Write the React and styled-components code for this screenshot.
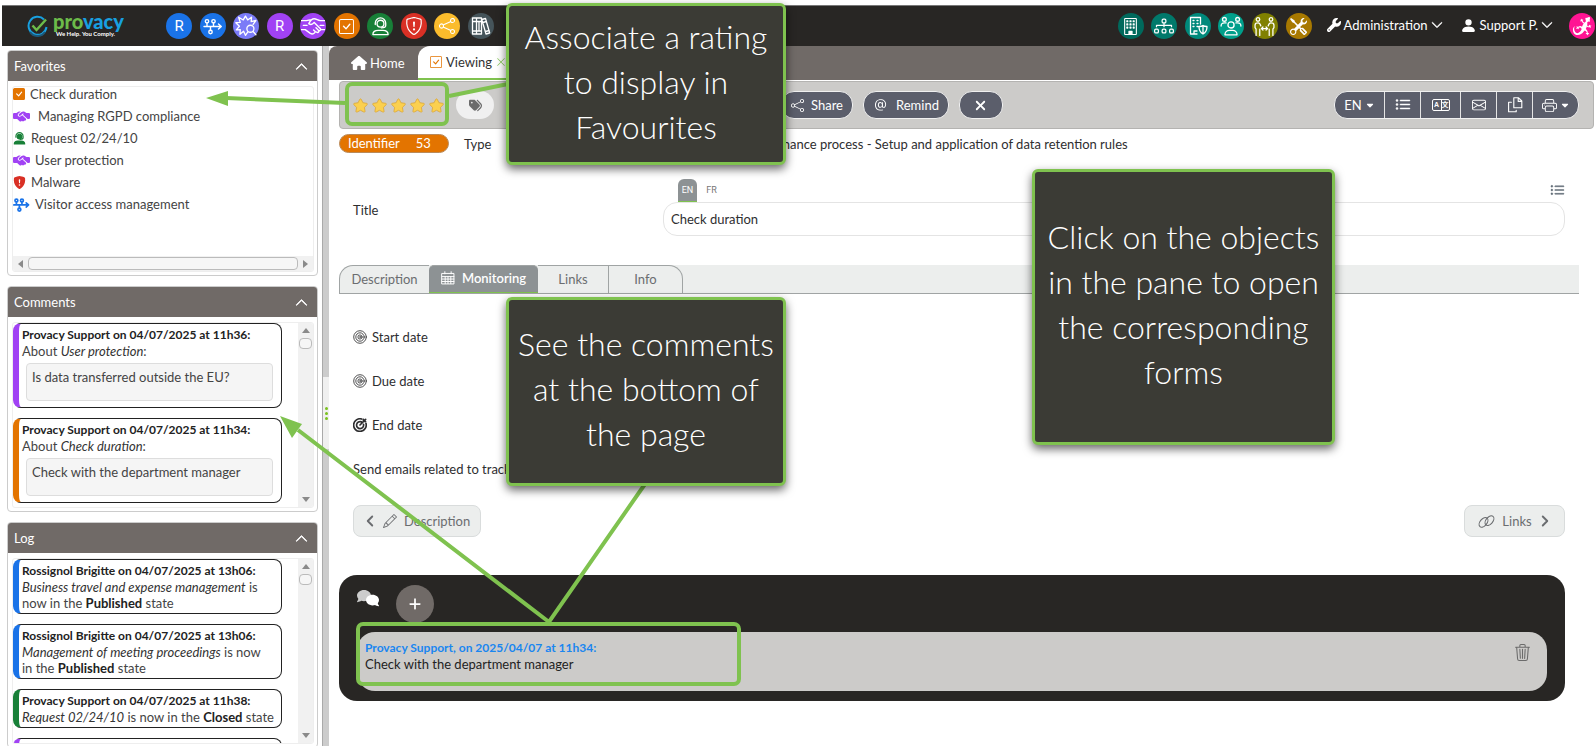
import React, { useState } from "react";
import styled, { createGlobalStyle } from "styled-components";
import {
  BsAt,
  BsBuilding,
  BsCheckSquare,
  BsCheckSquareFill,
  BsChevronDown,
  BsChevronLeft,
  BsChevronRight,
  BsChevronUp,
  BsDiagram3,
  BsEnvelope,
  BsListUl,
  BsPencil,
  BsPersonFill,
  BsPrinter,
  BsShare,
  BsShieldExclamation,
  BsShieldFillExclamation,
  BsTools,
  BsTrash3,
  BsXLg
} from "react-icons/bs";
import { FaCaretDown, FaComment, FaHandshakeSimple, FaHouse, FaPlus, FaStar, FaTags, FaWrench, FaXmark } from "react-icons/fa6";
import { GiGecko } from "react-icons/gi";

const green = "#7fc24f";
const blue = "#1a73e8";
const purple = "#a142f4";
const orange = "#e37400";
const darkGreen = "#188038";
const red = "#d93025";

const GlobalStyle = createGlobalStyle`
  * { box-sizing: border-box; }
  body {
    margin: 0;
    background: #fff;
    color: #2e2e30;
    font-family: Lato, "Liberation Sans", sans-serif;
    font-size: 13px;
    line-height: 16px;
  }
  button, input { font-family: inherit; font-size: inherit; line-height: inherit; color: inherit; }
  svg { flex: none; display: block; }
`;

const Page = styled.div`
  position: relative;
  display: flex;
  flex-direction: column;
  height: 100vh;
  padding: 5px 0 0 2px;
  overflow: hidden;
`;

/* top bar */

const TopBar = styled.header`
  display: flex;
  align-items: center;
  flex: none;
  height: 41px;
  padding: 0 1px 0 25px;
  background: #282624;
  border-top: 1px solid #777;
  color: #fff;
`;
const Logo = styled.a`
  display: flex;
  align-items: center;
  gap: 5px;
  width: 139px;
  color: #fff;
  text-decoration: none;
`;
const LogoText = styled.span`
  display: flex;
  flex-direction: column;
`;
const LogoName = styled.span`
  font-size: 20px;
  font-weight: 900;
  line-height: 16px;
  color: #18a0e0;

  b { color: #6cbb4a; font-weight: inherit; }
`;
const LogoTagline = styled.span`
  padding-left: 3px;
  font-size: 6px;
  font-weight: 700;
  line-height: 10px;
  white-space: nowrap;
`;
const Shortcuts = styled.nav`
  display: flex;
  justify-content: space-between;
  width: ${(p) => p.$width}px;
  margin-left: ${(p) => (p.$end ? "auto" : "0")};
`;
const Shortcut = styled.button`
  display: flex;
  align-items: center;
  justify-content: center;
  width: 26px;
  height: 26px;
  padding: 0;
  border: 0;
  border-radius: 50%;
  background: ${(p) => p.$color};
  color: #fff;
  cursor: pointer;
`;
const Letter = styled.span`
  font-family: Roboto, sans-serif;
  font-size: 15px;
`;
const MenuButton = styled.button`
  display: flex;
  align-items: center;
  gap: 3px;
  margin-left: ${(p) => p.$gap}px;
  padding: 0 0 2px;
  border: 0;
  background: none;
  color: #fff;
  cursor: pointer;
`;
const GeckoButton = styled(Shortcut)`
  margin-left: 16px;
`;

/* sidebar */

const Body = styled.div`
  display: flex;
  flex: 1;
  min-height: 0;
`;
const Sidebar = styled.aside`
  display: flex;
  flex-direction: column;
  gap: 10px;
  width: 320px;
  padding: 4px 4px 0 5px;
  overflow: hidden;
`;
const Panel = styled.section`
  display: flex;
  flex-direction: column;
  flex: none;
  height: 226px;
  border: 1px solid #ccc;
  border-radius: 4px;
`;
const PanelHead = styled.header`
  display: flex;
  align-items: center;
  justify-content: space-between;
  height: 30px;
  padding: 0 9px 0 6px;
  border-radius: 3px 3px 0 0;
  background: #706a67;
  color: #fff;

  h2 { margin: 0; font-size: 13px; font-weight: 400; }
  button { padding: 0; border: 0; background: none; cursor: pointer; }
`;
const PanelBody = styled.div`
  display: flex;
  flex: 1;
  flex-direction: ${(p) => (p.$column ? "column" : "row")};
  min-height: 0;
  margin: 5px 3px 3px 4px;
  border: 1px solid #eee;
  border-radius: 3px;
  overflow: hidden;
`;
const FavoriteList = styled.ul`
  flex: 1;
  margin: -4px 0 0;
  padding: 0;
  list-style: none;
`;
const Favorite = styled.a`
  display: flex;
  align-items: center;
  gap: ${(p) => p.$gap}px;
  height: 22px;
  color: #444;
  text-decoration: none;

  svg { color: ${(p) => p.$color}; }
`;
const ScrollTrack = styled.div`
  display: flex;
  flex-direction: ${(p) => (p.$vertical ? "column" : "row")};
  align-items: center;
  justify-content: space-between;
  flex: none;
  padding: ${(p) => (p.$vertical ? "4px 1px" : "1px 4px")};
  width: ${(p) => (p.$vertical ? "15px" : "auto")};
  height: ${(p) => (p.$vertical ? "auto" : "15px")};
  gap: 3px;
  background: #f1f1f1;
  color: #8a8a8a;
`;
const ScrollThumb = styled.div`
  flex: ${(p) => (p.$vertical ? "none" : "1")};
  width: ${(p) => (p.$vertical ? "13px" : "auto")};
  height: ${(p) => (p.$vertical ? "11px" : "13px")};
  margin-bottom: ${(p) => (p.$vertical ? "auto" : "0")};
  border: 1px solid #bbb;
  border-radius: 4px;
  background: #f6f6f6;
`;
const Cards = styled.div`
  display: flex;
  flex: 1;
  flex-direction: column;
  gap: 10px;
  min-width: 0;
  padding-right: 16px;
  overflow: hidden;
`;
const Card = styled.article`
  flex: none;
  padding: 3px 2px 2px 3px;
  border: 1px solid #222;
  border-left: 6px solid ${(p) => p.$color};
  border-radius: 8px;
  color: #444;

  h3 { margin: 0; font-size: 12px; line-height: 16px; white-space: nowrap; }
  h3, strong { color: #222; }
  p { margin: 0; }
  em { color: #333; }
`;
const Quote = styled.div`
  height: 38px;
  margin: 4px 6px 4px 4px;
  padding: 5px;
  border: 1px solid #ddd;
  border-radius: 4px;
  background: #f5f5f5;
`;
const Splitter = styled.div`
  display: flex;
  flex: none;
  align-items: center;
  width: 7px;
  padding-top: 34px;
  border-left: 1px solid #aaa;
  background: #ccc;
`;
const SplitterGrip = styled.div`
  display: flex;
  flex-direction: column;
  align-items: center;
  justify-content: center;
  gap: 2px;
  width: 6px;
  height: 72px;
  background: #f0f0f0;

  span { width: 3px; height: 3px; border-radius: 50%; background: #7ac11f; }
`;

/* main area */

const Main = styled.main`
  flex: 1;
  min-width: 0;
`;
const PageTabs = styled.nav`
  display: flex;
  height: 34px;
  padding-left: 22px;
  border-radius: 8px 0 0 0;
  background: #706a67;
`;
const PageTab = styled.button`
  display: flex;
  align-items: center;
  gap: ${(p) => (p.$active ? 4 : 3)}px;
  width: ${(p) => p.$width}px;
  padding: ${(p) => (p.$active ? "0 12px" : "0")};
  border: 0;
  border-bottom: ${(p) => (p.$active ? `2px solid ${green}` : "0")};
  border-radius: 12px 12px 0 0;
  background: ${(p) => (p.$active ? "#fff" : "none")};
  color: ${(p) => (p.$active ? "#333" : "#fff")};
  cursor: pointer;
`;
const Toolbar = styled.div`
  display: flex;
  align-items: center;
  height: 48px;
  margin: 1px 2px 0 10px;
  padding: 0 14px 0 13px;
  border: 1px solid #b4b3b1;
  border-radius: 4px;
  background: #cccbc9;
`;
const Stars = styled.div`
  display: flex;
  gap: 4px;
  width: 103px;

  svg { color: #fbd04f; stroke: #d9a437; stroke-width: 30px; overflow: visible; }
`;
const TagButton = styled.button`
  display: flex;
  align-items: center;
  justify-content: center;
  width: 38px;
  height: 28px;
  border: 0;
  border-radius: 14px;
  background: #f0f0f0;
  color: #6b6b6b;
`;
const ToolButtons = styled.div`
  display: flex;
  align-items: center;
  gap: 10px;
  margin-left: 287px;
`;
const ToolButton = styled.button`
  display: flex;
  align-items: center;
  justify-content: center;
  gap: 7px;
  min-width: 44px;
  height: 28px;
  padding: 0 9px;
  border: 1px solid #f0f0f0;
  border-radius: 13px;
  background: #5b5e6b;
  color: #fff;
  cursor: pointer;
`;
const ButtonGroup = styled.div`
  display: flex;
  margin-left: auto;
  border: 1px solid #f0f0f0;
  border-radius: 13px;
  background: #5b5e6b;
  overflow: hidden;
`;
const GroupButton = styled.button`
  display: flex;
  align-items: center;
  justify-content: center;
  gap: 3px;
  width: ${(p) => p.$width}px;
  height: 26px;
  padding: 0;
  border: 0;
  border-left: ${(p) => (p.$first ? "0" : "1px solid #e4e4e4")};
  background: none;
  color: #fff;
  cursor: pointer;
`;
const LanguagePair = styled.span`
  display: grid;
  grid-template-columns: 1fr 1fr;
  width: 18px;
  height: 12px;
  border: 1px solid #fff;
  border-radius: 2px;
  font-family: "Liberation Sans", "Noto Sans CJK SC", sans-serif;
  font-size: 7px;
  font-weight: 700;
  line-height: 10px;

  span + span { border-left: 1px solid #fff; }
`;
const MetaRow = styled.div`
  display: flex;
  align-items: center;
  height: 29px;
  padding-left: 10px;
`;
const Identifier = styled.span`
  display: flex;
  gap: 16px;
  width: 110px;
  height: 19px;
  padding: 0 8px;
  border: 1px solid #b98a5a;
  border-radius: 10px;
  background: ${orange};
  color: #fff;
`;
const MetaLabel = styled.span`
  width: 284px;
  margin-left: 15px;
`;
const TitleRow = styled.div`
  display: grid;
  grid-template-columns: 310px 1fr;
  align-items: end;
  padding: 21px 31px 0 24px;

  label { padding-bottom: 18px; }
`;
const LangBar = styled.div`
  display: flex;
  align-items: center;
  padding-left: 15px;
  color: #5f6a74;

  svg { margin-left: auto; }
`;
const LangTab = styled.button`
  width: ${(p) => (p.$active ? "19px" : "29px")};
  height: 23px;
  padding: 0;
  border: 0;
  border-bottom: 1px solid ${(p) => (p.$active ? green : "transparent")};
  border-radius: 6px 6px 0 0;
  background: ${(p) => (p.$active ? "#8d9294" : "none")};
  color: ${(p) => (p.$active ? "#fff" : "#777")};
  font-family: Roboto, sans-serif;
  font-size: 9px;
`;
const TitleInput = styled.input`
  width: 100%;
  height: 34px;
  padding: 0 7px;
  border: 1px solid #e4e4e4;
  border-radius: 14px;
  background: #fff;
`;
const FormTabs = styled.nav`
  display: flex;
  height: 29px;
  margin: 29px 17px 0 10px;
  border-bottom: 1px solid #a0a4a4;
  background: linear-gradient(to right, #fff 20px, #eceeed 20px);
`;
const FormTab = styled.button`
  display: flex;
  align-items: center;
  justify-content: center;
  gap: 7px;
  width: ${(p) => p.$width}px;
  padding: 0 0 2px;
  border: 1px solid #a0a4a4;
  border-width: 1px ${(p) => (p.$active || p.$joined ? 0 : 1)}px 0 0;
  border-left-width: ${(p) => (p.$edge === "left" ? 1 : 0)}px;
  border-bottom: ${(p) => (p.$active ? `1px solid ${green}` : "0")};
  border-radius: ${(p) => (p.$edge === "left" ? "14px 0 0 0" : p.$edge === "right" ? "0 14px 0 0" : p.$active ? "5px 5px 0 0" : "0")};
  background: ${(p) => (p.$active ? "#8d9294" : "#eceeed")};
  color: ${(p) => (p.$active ? "#fff" : "#6b6d70")};
  font-weight: ${(p) => (p.$active ? 600 : 400)};
  cursor: pointer;
`;
const Fields = styled.div`
  padding: 21px 31px 0 24px;
`;
const Field = styled.div`
  display: flex;
  align-items: center;
  gap: 5px;
  height: 44px;
`;
const StepRow = styled.div`
  display: flex;
  justify-content: space-between;
  padding: 14px 31px 0 24px;
`;
const StepButton = styled.button`
  display: flex;
  align-items: center;
  justify-content: center;
  gap: 7px;
  min-width: 101px;
  height: 32px;
  padding: 0 10px;
  border: 1px solid #d9dcdc;
  border-radius: 8px;
  background: #eceeed;
  color: #6b6d70;
  cursor: pointer;
`;
const Discussion = styled.section`
  margin: 38px 31px 0 10px;
  padding: 10px 18px;
  border-radius: 18px;
  background: #282624;
  color: #fff;
`;
const DiscussionHead = styled.div`
  display: flex;
  gap: 17px;
  padding-bottom: 9px;
`;
const Bubbles = styled.span`
  display: flex;
  width: 22px;
  height: 20px;
  margin-top: 4px;

  svg:first-child { color: #ccc; }
  svg:last-child { margin: 5px 0 0 -5px; transform: scaleX(-1); }
`;
const AddButton = styled.button`
  display: flex;
  align-items: center;
  justify-content: center;
  width: 38px;
  height: 38px;
  padding: 0;
  border: 0;
  border-radius: 50%;
  background: #706a67;
  color: #fff;
  cursor: pointer;
`;
const Comment = styled.article`
  display: flex;
  justify-content: space-between;
  height: 59px;
  padding: 8px 16px 8px 8px;
  border-radius: 18px;
  background: #cccbc9;
  color: #222;

  h3 { margin: 0; color: #1a86f0; font-size: 12px; line-height: 16px; }
  p { margin: 0; }
  button { height: 22px; padding: 4px 0; border: 0; background: none; color: #6b6b6b; }
`;

/* guided tour laid over the page */

const Callout = styled.div`
  position: absolute;
  left: ${(p) => p.$x}px;
  top: ${(p) => p.$y}px;
  display: flex;
  align-items: center;
  justify-content: center;
  width: ${(p) => p.$w}px;
  height: ${(p) => p.$h}px;
  padding-bottom: 6px;
  border: 3px solid ${green};
  border-radius: 6px;
  background: #3b3b35;
  box-shadow: 0 4px 10px rgba(0, 0, 0, 0.6);
  color: #fff;
  font-size: 32px;
  font-weight: 300;
  line-height: 45px;
  text-align: center;
  white-space: pre-line;
`;
const Arrows = styled.svg`
  position: absolute;
  left: 0;
  top: 0;
  width: 100%;
  height: 100%;
  pointer-events: none;
`;

const Glyph = ({ size = 20, width = 1.4, children }) => (
  <svg width={size} height={size} viewBox="0 0 20 20" fill="none" stroke="currentColor" strokeWidth={width} strokeLinecap="round" strokeLinejoin="round" aria-hidden="true">
    {children}
  </svg>
);

const Flow = (props) => (
  <Glyph {...props}>
    <path d="M1 10.5h17M15.5 8l2.8 2.5-2.8 2.5M4 10.5V7M10.5 10.5V7M7.5 10.5v4" />
    <circle cx="4" cy="5.3" r="1.7" /><circle cx="10.5" cy="5.3" r="1.7" /><circle cx="7.5" cy="16" r="1.7" />
  </Glyph>
);
const Burst = () => (
  <Glyph size={22} width={1.2}>
    <path d="M11.5 15.5l-2 3-1.7-3.8L4.5 17.5l.3-4.2-3.6.2L4 10.2.8 7l4-.3L3.3 2l4.2 2.5L9.5 1l2 3.5L15 2l-.3 4 4.300-1-2.500 3.500" />
    <circle cx="14" cy="12.5" r="3.2" /><path d="M16.300 14.900l2.700 3" />
  </Glyph>
);
const Shake = () => (
  <Glyph size={24} width={1.2}>
    <path d="M0 5.5h4.5c2 0 2.5-1 4-.5M20 5.5h-4c-2 0-3-1.5-5-1.5-2 0-3.5 2-4.5 4 2 1.5 3.5.3 4.5-1l5 5c1 1.2-.5 2.5-1.5 1.5M0 13h3.5l4 3c1.5 1 3 .7 4-.5M20 13h-3.5M2 9.5h3M16 9.5h3M12.5 11.5l2 2c1 1.2-.5 2.5-1.7 1.5M10.5 13.3l1.5 1.5" />
  </Glyph>
);
const Agent = ({ filled, size = 20 }) => (
  <Glyph size={size} width={filled ? 1.8 : 1.4}>
    <circle cx="10" cy="7" r="3.6" fill={filled ? "currentColor" : "none"} />
    <path d="M4.5 8V6.5a5.5 5.5 0 0 1 11 0V9c0 2-2 2.5-4.5 2.5" />
    <path d="M2 18.5c0-3 2-4.5 5.5-4.5h5c3.5 0 5.5 1.5 5.5 4.5z" fill={filled ? "currentColor" : "none"} />
  </Glyph>
);
const Books = () => (
  <Glyph width={1.3}>
    <path d="M1.5 2h4v16h-4zM5.5 2h5v16h-5zM1.5 5.5h9M1.5 15h9M8 5.5v9.5M10.8 3.5l3.7-1L18.7 17l-3.7 1zM11.7 6.5l3.7-1M14.5 15.5l3.7-1" />
  </Glyph>
);
const ShieldedBuilding = () => (
  <Glyph width={1.3}>
    <path d="M9 18H2.5V1.5h10V8M6 18v-3h3M5 4.5h1M9 4.5h1M5 7.5h1M9 7.5h1M5 10.5h1M9 10.5h1M15 9.5c1 1 2.5 1 4 1 0 4-1 6-4 7.5-3-1.5-4-3.5-4-7.5 1.5 0 3 0 4-1zM15 10v7.5" />
  </Glyph>
);
const Crowd = () => (
  <Glyph size={22} width={1.2}>
    <circle cx="10" cy="9" r="2.8" /><circle cx="4" cy="4" r="1.7" /><circle cx="16" cy="4" r="1.7" />
    <path d="M4.5 18c0-2.5 2-4 4-4h3c2 0 4 1.5 4 4zM1 10c0-2 1-2.8 3-2.8h1.5M19 10c0-2-1-2.8-3-2.8h-1.5" />
  </Glyph>
);
const Exchange = () => (
  <Glyph size={21} width={1.2}>
    <circle cx="3.8" cy="3.3" r="1.7" /><circle cx="16.2" cy="3.3" r="1.7" />
    <path d="M2 18.5v-6L1 11V8.5C1 7 2 6.5 4 6.5c1.5 0 2 1 2.5 3M5.5 18.5v-6M18 18.5v-6l1-1.5V8.5c0-1.5-1-2-3-2-1.5 0-2 1-2.5 3M14.5 18.5v-6M7 12h6M8.5 10.5L7 12l1.5 1.5M11.5 10.5L13 12l-1.5 1.5" />
  </Glyph>
);
const Pages = () => (
  <Glyph size={16}>
    <path d="M8.5 1h6l4 4v8.5h-10zM14 1v4.5h4.5M5.5 6.5H2V18.5h9.5v-2" />
  </Glyph>
);
const Calendar = () => (
  <Glyph size={14}>
    <path d="M1.5 3.5h17v15h-17zM1.5 8h17M1.5 11.5h17M1.5 15h17M6 8v10M10 8v10M14 8v10M5.5 1v3M14.5 1v3" />
  </Glyph>
);
const Target = () => (
  <Glyph size={14} width={1.2}>
    <circle cx="10" cy="10" r="9" /><circle cx="10" cy="10" r="6" /><circle cx="10" cy="10" r="3" /><circle cx="10" cy="10" r="0.5" />
  </Glyph>
);
const TargetHit = () => (
  <Glyph size={14} width={2.4}>
    <path d="M12.5 1.5a9 9 0 1 0 6 6M12 5.5a5 5 0 1 0 3 3.5M10 10l8-8M15 2v3h3" />
  </Glyph>
);
const Chain = () => (
  <Glyph size={17} width={1.3}>
    <ellipse cx="6.5" cy="11" rx="6.5" ry="4" transform="rotate(-50 6.5 11)" />
    <ellipse cx="13.5" cy="9" rx="6.5" ry="4" transform="rotate(-50 13.5 9)" />
  </Glyph>
);
const Triangle = ({ turn }) => (
  <svg width="8" height="8" viewBox="0 0 8 8" aria-hidden="true">
    <path d="M0 6l4-5 4 5z" fill="currentColor" transform={`rotate(${turn} 4 4)`} />
  </svg>
);

const leftShortcuts = [
  { name: "Records", color: blue, icon: <Letter>R</Letter> },
  { name: "Processes", color: blue, icon: <Flow /> },
  { name: "Analyses", color: "#7b7bf7", icon: <Burst /> },
  { name: "Processor records", color: purple, icon: <Letter>R</Letter> },
  { name: "Contracts", color: purple, icon: <Shake /> },
  { name: "Tasks", color: orange, icon: <BsCheckSquare size={15} /> },
  { name: "Requests", color: darkGreen, icon: <Agent size={19} /> },
  { name: "Incidents", color: red, icon: <BsShieldExclamation size={18} /> },
  { name: "Share", color: "#fbbc2c", icon: <BsShare size={16} /> },
  { name: "Library", color: "#45545a", icon: <Books /> }
];

const rightShortcuts = [
  { name: "Company", color: "#00695c", icon: <BsBuilding size={17} /> },
  { name: "Organisation", color: "#00796b", icon: <BsDiagram3 size={20} /> },
  { name: "Protection", color: "#00897b", icon: <ShieldedBuilding /> },
  { name: "People", color: "#009f8b", icon: <Crowd /> },
  { name: "Third parties", color: "#808000", icon: <Exchange /> },
  { name: "Tools", color: "#a87900", icon: <BsTools size={17} /> }
];

const favorites = [
  { label: "Check duration", color: orange, gap: 5, icon: <BsCheckSquareFill size={12} /> },
  { label: "Managing RGPD compliance", color: purple, gap: 8, icon: <FaHandshakeSimple size={17} /> },
  { label: "Request 02/24/10", color: darkGreen, gap: 5, icon: <Agent filled size={13} /> },
  { label: "User protection", color: purple, gap: 5, icon: <FaHandshakeSimple size={17} /> },
  { label: "Malware", color: red, gap: 5, icon: <BsShieldFillExclamation size={13} /> },
  { label: "Visitor access management", color: blue, gap: 5, icon: <Flow size={17} width={2} /> }
];

const comments = [
  { time: "11h36", about: "User protection", text: "Is data transferred outside the EU?", color: purple },
  { time: "11h34", about: "Check duration", text: "Check with the department manager", color: orange }
];

const logs = [
  { who: "Rossignol Brigitte", time: "13h06", object: "Business travel and expense management", state: "Published", color: blue },
  { who: "Rossignol Brigitte", time: "13h06", object: "Management of meeting proceedings", state: "Published", color: blue },
  { who: "Provacy Support", time: "11h38", object: "Request 02/24/10", state: "Closed", color: darkGreen },
  { who: "Provacy Support", time: "11h37", object: "User protection", state: "Published", color: purple }
];

const SidePanel = ({ title, children }) => (
  <Panel>
    <PanelHead>
      <h2>{title}</h2>
      <button aria-label={`Collapse ${title}`}><BsChevronUp size={13} strokeWidth={1} /></button>
    </PanelHead>
    {children}
  </Panel>
);

const VerticalScroll = () => (
  <ScrollTrack $vertical>
    <Triangle turn={0} />
    <ScrollThumb $vertical />
    <Triangle turn={180} />
  </ScrollTrack>
);

const ShortcutBar = ({ items, width, end }) => (
  <Shortcuts $width={width} $end={end}>
    {items.map((s) => (
      <Shortcut key={s.name} $color={s.color} aria-label={s.name}>{s.icon}</Shortcut>
    ))}
  </Shortcuts>
);

const App = () => {
  const [title, setTitle] = useState("Check duration");

  return (
    <Page>
      <GlobalStyle />
      <TopBar>
        <Logo href="#">
          <svg width="21" height="22" viewBox="0 0 21 22" fill="none" aria-hidden="true">
            <path d="M17 4.5A9 9 0 1 0 19.5 12" stroke="#18a0e0" strokeWidth="2" />
            <path d="M3 17a9 9 0 0 0 15 0" stroke="#1c5878" strokeWidth="2" />
            <path d="M5.5 10.5l4 4.5L19 4.5" stroke="#6cbb4a" strokeWidth="2.5" />
          </svg>
          <LogoText>
            <LogoName><b>pro</b>vacy</LogoName>
            <LogoTagline>We Help. You Comply.</LogoTagline>
          </LogoText>
        </Logo>
        <ShortcutBar items={leftShortcuts} width={328} />
        <ShortcutBar items={rightShortcuts} width={194} end />
        <MenuButton $gap={15}><FaWrench size={14} />Administration <BsChevronDown size={12} strokeWidth={1} /></MenuButton>
        <MenuButton $gap={17}><BsPersonFill size={17} />Support P. <BsChevronDown size={12} strokeWidth={1} /></MenuButton>
        <GeckoButton $color="#ff1493" aria-label="Assistant"><GiGecko size={20} /></GeckoButton>
      </TopBar>

      <Body>
        <Sidebar>
          <SidePanel title="Favorites">
            <PanelBody $column>
              <FavoriteList>
                {favorites.map((f) => (
                  <li key={f.label}>
                    <Favorite href="#" $color={f.color} $gap={f.gap}>{f.icon}{f.label}</Favorite>
                  </li>
                ))}
              </FavoriteList>
              <ScrollTrack>
                <Triangle turn={-90} />
                <ScrollThumb />
                <Triangle turn={90} />
              </ScrollTrack>
            </PanelBody>
          </SidePanel>

          <SidePanel title="Comments">
            <PanelBody>
              <Cards>
                {comments.map((c) => (
                  <Card key={c.time} $color={c.color}>
                    <h3>Provacy Support on 04/07/2025 at {c.time}:</h3>
                    <p>About <em>{c.about}</em>:</p>
                    <Quote>{c.text}</Quote>
                  </Card>
                ))}
              </Cards>
              <VerticalScroll />
            </PanelBody>
          </SidePanel>

          <SidePanel title="Log">
            <PanelBody>
              <Cards>
                {logs.map((l) => (
                  <Card key={l.object} $color={l.color}>
                    <h3>{l.who} on 04/07/2025 at {l.time}:</h3>
                    <p><em>{l.object}</em> is now in&nbsp;the <strong>{l.state}</strong> state</p>
                  </Card>
                ))}
              </Cards>
              <VerticalScroll />
            </PanelBody>
          </SidePanel>
        </Sidebar>

        <Splitter>
          <SplitterGrip><span /><span /><span /></SplitterGrip>
        </Splitter>

        <Main>
          <PageTabs>
            <PageTab $width={67}><FaHouse size={16} />Home</PageTab>
            <PageTab $width={120} $active><BsCheckSquare size={12} color={orange} />Viewing <BsXLg size={10} color={green} /></PageTab>
          </PageTabs>

          <Toolbar>
            <Stars role="img" aria-label="5 stars">
              {[1, 2, 3, 4, 5].map((n) => <FaStar key={n} size={15} />)}
            </Stars>
            <TagButton aria-label="Tags"><FaTags size={13} /></TagButton>
            <ToolButtons>
              <ToolButton><BsShare size={13} />Share</ToolButton>
              <ToolButton><BsAt size={16} />Remind</ToolButton>
              <ToolButton aria-label="Close"><FaXmark size={15} /></ToolButton>
            </ToolButtons>
            <ButtonGroup>
              <GroupButton $width={49} $first>EN<FaCaretDown size={10} /></GroupButton>
              <GroupButton $width={36} aria-label="List"><BsListUl size={16} strokeWidth={0.5} /></GroupButton>
              <GroupButton $width={40} aria-label="Translate"><LanguagePair><span>A</span><span>文</span></LanguagePair></GroupButton>
              <GroupButton $width={36} aria-label="Send"><BsEnvelope size={14} /></GroupButton>
              <GroupButton $width={36} aria-label="Duplicate"><Pages /></GroupButton>
              <GroupButton $width={46} aria-label="Print"><BsPrinter size={15} /><FaCaretDown size={10} /></GroupButton>
            </ButtonGroup>
          </Toolbar>

          <MetaRow>
            <Identifier><span>Identifier</span><span>53</span></Identifier>
            <MetaLabel>Type</MetaLabel>
            <span>Governance process - Setup and application of data retention rules</span>
          </MetaRow>

          <TitleRow>
            <label htmlFor="title">Title</label>
            <div>
              <LangBar>
                <LangTab $active>EN</LangTab>
                <LangTab>FR</LangTab>
                <BsListUl size={15} strokeWidth={0.5} />
              </LangBar>
              <TitleInput id="title" value={title} onChange={(e) => setTitle(e.target.value)} />
            </div>
          </TitleRow>

          <FormTabs>
            <FormTab $width={90} $edge="left" $joined>Description</FormTab>
            <FormTab $width={109} $active><Calendar />Monitoring</FormTab>
            <FormTab $width={71}>Links</FormTab>
            <FormTab $width={74} $edge="right">Info</FormTab>
          </FormTabs>

          <Fields>
            <Field><Target />Start date</Field>
            <Field><Target />Due date</Field>
            <Field><TargetHit />End date</Field>
            <Field>Send emails related to tracking</Field>
          </Fields>

          <StepRow>
            <StepButton><BsChevronLeft size={12} strokeWidth={1.5} /><BsPencil size={14} />Description</StepButton>
            <StepButton><Chain />Links<BsChevronRight size={12} strokeWidth={1.5} /></StepButton>
          </StepRow>

          <Discussion>
            <DiscussionHead>
              <Bubbles><FaComment size={14} /><FaComment size={13} /></Bubbles>
              <AddButton aria-label="Add a comment"><FaPlus size={14} /></AddButton>
            </DiscussionHead>
            <Comment>
              <div>
                <h3>Provacy Support, on 2025/04/07 at 11h34:</h3>
                <p>Check with the department manager</p>
              </div>
              <button aria-label="Delete"><BsTrash3 size={17} /></button>
            </Comment>
          </Discussion>
        </Main>
      </Body>

      <Arrows aria-hidden="true" fill="none" stroke={green} strokeWidth="4">
        <rect x="347" y="84" width="100" height="40" rx="5" />
        <path d="M345 103L226 98M449 96L508 84" />
        <path d="M206 98l22-7v15z" fill={green} stroke="none" />
        <rect x="358" y="624" width="381" height="60" rx="5" />
        <path d="M645 484L549 622L298 430" />
        <path d="M280 416l22 8-10 14z" fill={green} stroke="none" />
      </Arrows>
      <Callout $x={506} $y={3} $w={280} $h={162}>{"Associate a rating\nto display in\nFavourites"}</Callout>
      <Callout $x={506} $y={297} $w={280} $h={189}>{"See the comments\nat the bottom of\nthe page"}</Callout>
      <Callout $x={1032} $y={169} $w={303} $h={276}>{"Click on the objects\nin the pane to open\nthe corresponding\nforms"}</Callout>
    </Page>
  );
};

export default App;
